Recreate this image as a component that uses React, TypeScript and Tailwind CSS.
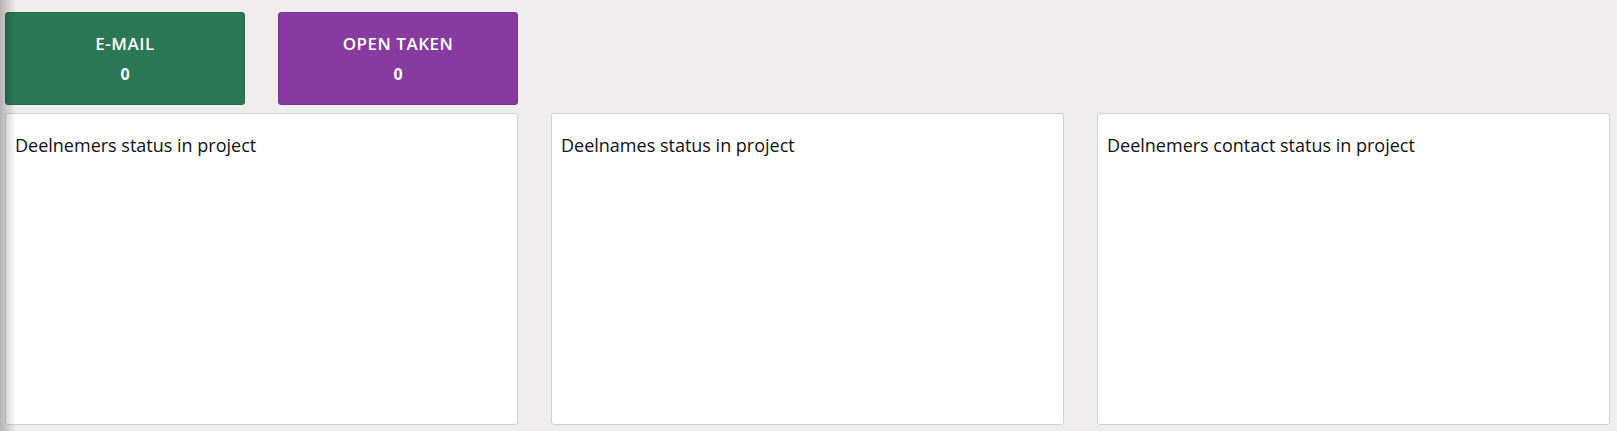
import React from 'react';

type Tile = {
  label: string;
  count: number;
  color: string;
};

const tiles: Array<Tile> = [
  { label: 'E-MAIL', count: 0, color: 'bg-[#2c7756] border-[#266a4c]' },
  { label: 'OPEN TAKEN', count: 0, color: 'bg-[#873ba0] border-[#7a3391]' },
];

const panels = [
  'Deelnemers status in project',
  'Deelnames status in project',
  'Deelnemers contact status in project',
];

export default function App() {
  return (
    <div
      className="relative min-h-screen bg-[#efeded] pl-[5px] pr-[7px] pt-3 text-black"
      style={{ fontFamily: '"Open Sans", Lato, sans-serif' }}
    >
      {/* sidebar shadow falling over the page */}
      <div className="pointer-events-none absolute inset-y-0 left-0 w-[16px] bg-gradient-to-r from-black/25 to-transparent" />

      <div className="grid grid-cols-6 gap-x-[33px] gap-y-2">
        {tiles.map((tile) => (
          <div
            key={tile.label}
            className={`flex h-[93px] flex-col items-center justify-center gap-[10px] rounded-[3px] border text-white ${tile.color}`}
          >
            <span className="text-[17px] font-semibold leading-5 tracking-[0.03em]">
              {tile.label}
            </span>
            <span className="text-[16px] font-bold leading-5">{tile.count}</span>
          </div>
        ))}
        <div className="col-span-4" />

        {panels.map((title) => (
          <div
            key={title}
            className="col-span-2 h-[312px] rounded-[3px] border border-[#d2d0d0] bg-white px-[9px] pt-[19px]"
          >
            <h3 className="text-[18px] font-normal leading-6 text-[#111]">{title}</h3>
          </div>
        ))}
      </div>
    </div>
  );
}
